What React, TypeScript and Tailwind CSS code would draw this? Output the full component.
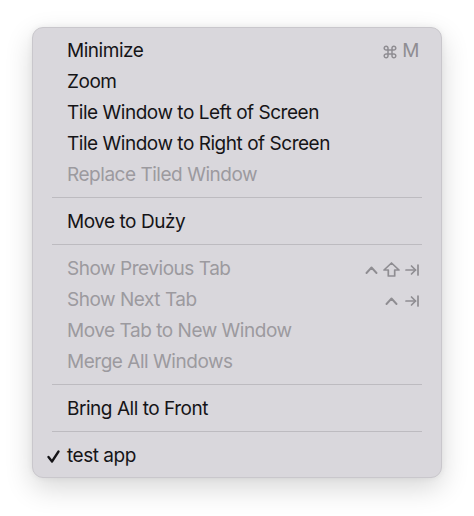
import React from "react";

type Item = {
  label: string;
  disabled?: boolean;
  checked?: boolean;
  shortcut?: React.ReactNode;
};

function Ctrl() {
  return (
    <svg width="13" height="8" viewBox="0 0 13 8" fill="none" stroke="currentColor" strokeWidth="1.9" strokeLinecap="round" strokeLinejoin="round">
      <path d="M1.5 7 L6.5 1.5 L11.5 7" />
    </svg>
  );
}

function Shift() {
  return (
    <svg width="17" height="15" viewBox="0 0 17 15" fill="none" stroke="currentColor" strokeWidth="1.7" strokeLinejoin="round">
      <path d="M8.5 1 L16 8 L11.7 8 L11.7 14 L5.3 14 L5.3 8 L1 8 Z" />
    </svg>
  );
}

function TabKey() {
  return (
    <svg width="14" height="12" viewBox="0 0 14 12" fill="none" stroke="currentColor" strokeWidth="1.7" strokeLinecap="round" strokeLinejoin="round">
      <path d="M1 6 L10.5 6" />
      <path d="M6.5 2 L10.5 6 L6.5 10" />
      <path d="M13 1 L13 11" />
    </svg>
  );
}

function Cmd() {
  return (
    <svg width="14" height="14" viewBox="0 0 14 14" fill="none" stroke="currentColor" strokeWidth="1.5">
      <path d="M5 5 L9 5 L9 9 L5 9 Z" />
      <path d="M5 5 L5 3.2 A1.9 1.9 0 1 0 3.2 5 L5 5" />
      <path d="M9 5 L9 3.2 A1.9 1.9 0 1 1 10.8 5 L9 5" />
      <path d="M5 9 L5 10.8 A1.9 1.9 0 1 1 3.2 9 L5 9" />
      <path d="M9 9 L9 10.8 A1.9 1.9 0 1 0 10.8 9 L9 9" />
    </svg>
  );
}

const groups: Item[][] = [
  [
    {
      label: "Minimize",
      shortcut: (
        <span className="flex items-center gap-[5px]">
          <Cmd />
          <span>M</span>
        </span>
      ),
    },
    { label: "Zoom" },
    { label: "Tile Window to Left of Screen" },
    { label: "Tile Window to Right of Screen" },
    { label: "Replace Tiled Window", disabled: true },
  ],
  [{ label: "Move to Duży" }],
  [
    {
      label: "Show Previous Tab",
      disabled: true,
      shortcut: (
        <span className="flex items-center gap-[5px]">
          <Ctrl />
          <Shift />
          <TabKey />
        </span>
      ),
    },
    {
      label: "Show Next Tab",
      disabled: true,
      shortcut: (
        <span className="flex items-center gap-[7px]">
          <Ctrl />
          <TabKey />
        </span>
      ),
    },
    { label: "Move Tab to New Window", disabled: true },
    { label: "Merge All Windows", disabled: true },
  ],
  [{ label: "Bring All to Front" }],
  [{ label: "test app", checked: true }],
];

function Row({ item }: { item: Item }) {
  return (
    <div className={`relative h-[31px] flex items-center pt-[2px] pl-[34px] pr-[22px] ${item.disabled ? "text-[#9c9a9f]" : "text-[#151417]"}`}>
      {item.checked && (
        <svg className="absolute left-[14px] top-[10px]" width="13" height="13" viewBox="0 0 13 13" fill="none" stroke="currentColor" strokeWidth="2.3" strokeLinecap="round" strokeLinejoin="round">
          <path d="M1.5 7 L5 11.5 L11.5 1.5" />
        </svg>
      )}
      <span className="flex-1">{item.label}</span>
      {item.shortcut && <span className="text-[#8f8d92]">{item.shortcut}</span>}
    </div>
  );
}

export default function App() {
  return (
    <div className="min-h-[516px] bg-white pt-[27px] pl-[32px] font-['Inter',sans-serif] text-[19px] tracking-[-0.47px]">
      <div className="w-[410px] rounded-[11px] bg-[#d9d7dc] border border-[#c9c7cc] shadow-[0_10px_28px_rgba(0,0,0,0.16),0_0_6px_rgba(0,0,0,0.06)] pt-[7px] pb-[6px]">
        {groups.map((group, gi) => (
          <div key={gi}>
            {gi > 0 && (
              <div className="h-[16px] pt-[7px] px-[19px]">
                <div className="h-px w-full bg-[#bdbbc0]" />
              </div>
            )}
            {group.map((item) => (
              <Row key={item.label} item={item} />
            ))}
          </div>
        ))}
      </div>
    </div>
  );
}
